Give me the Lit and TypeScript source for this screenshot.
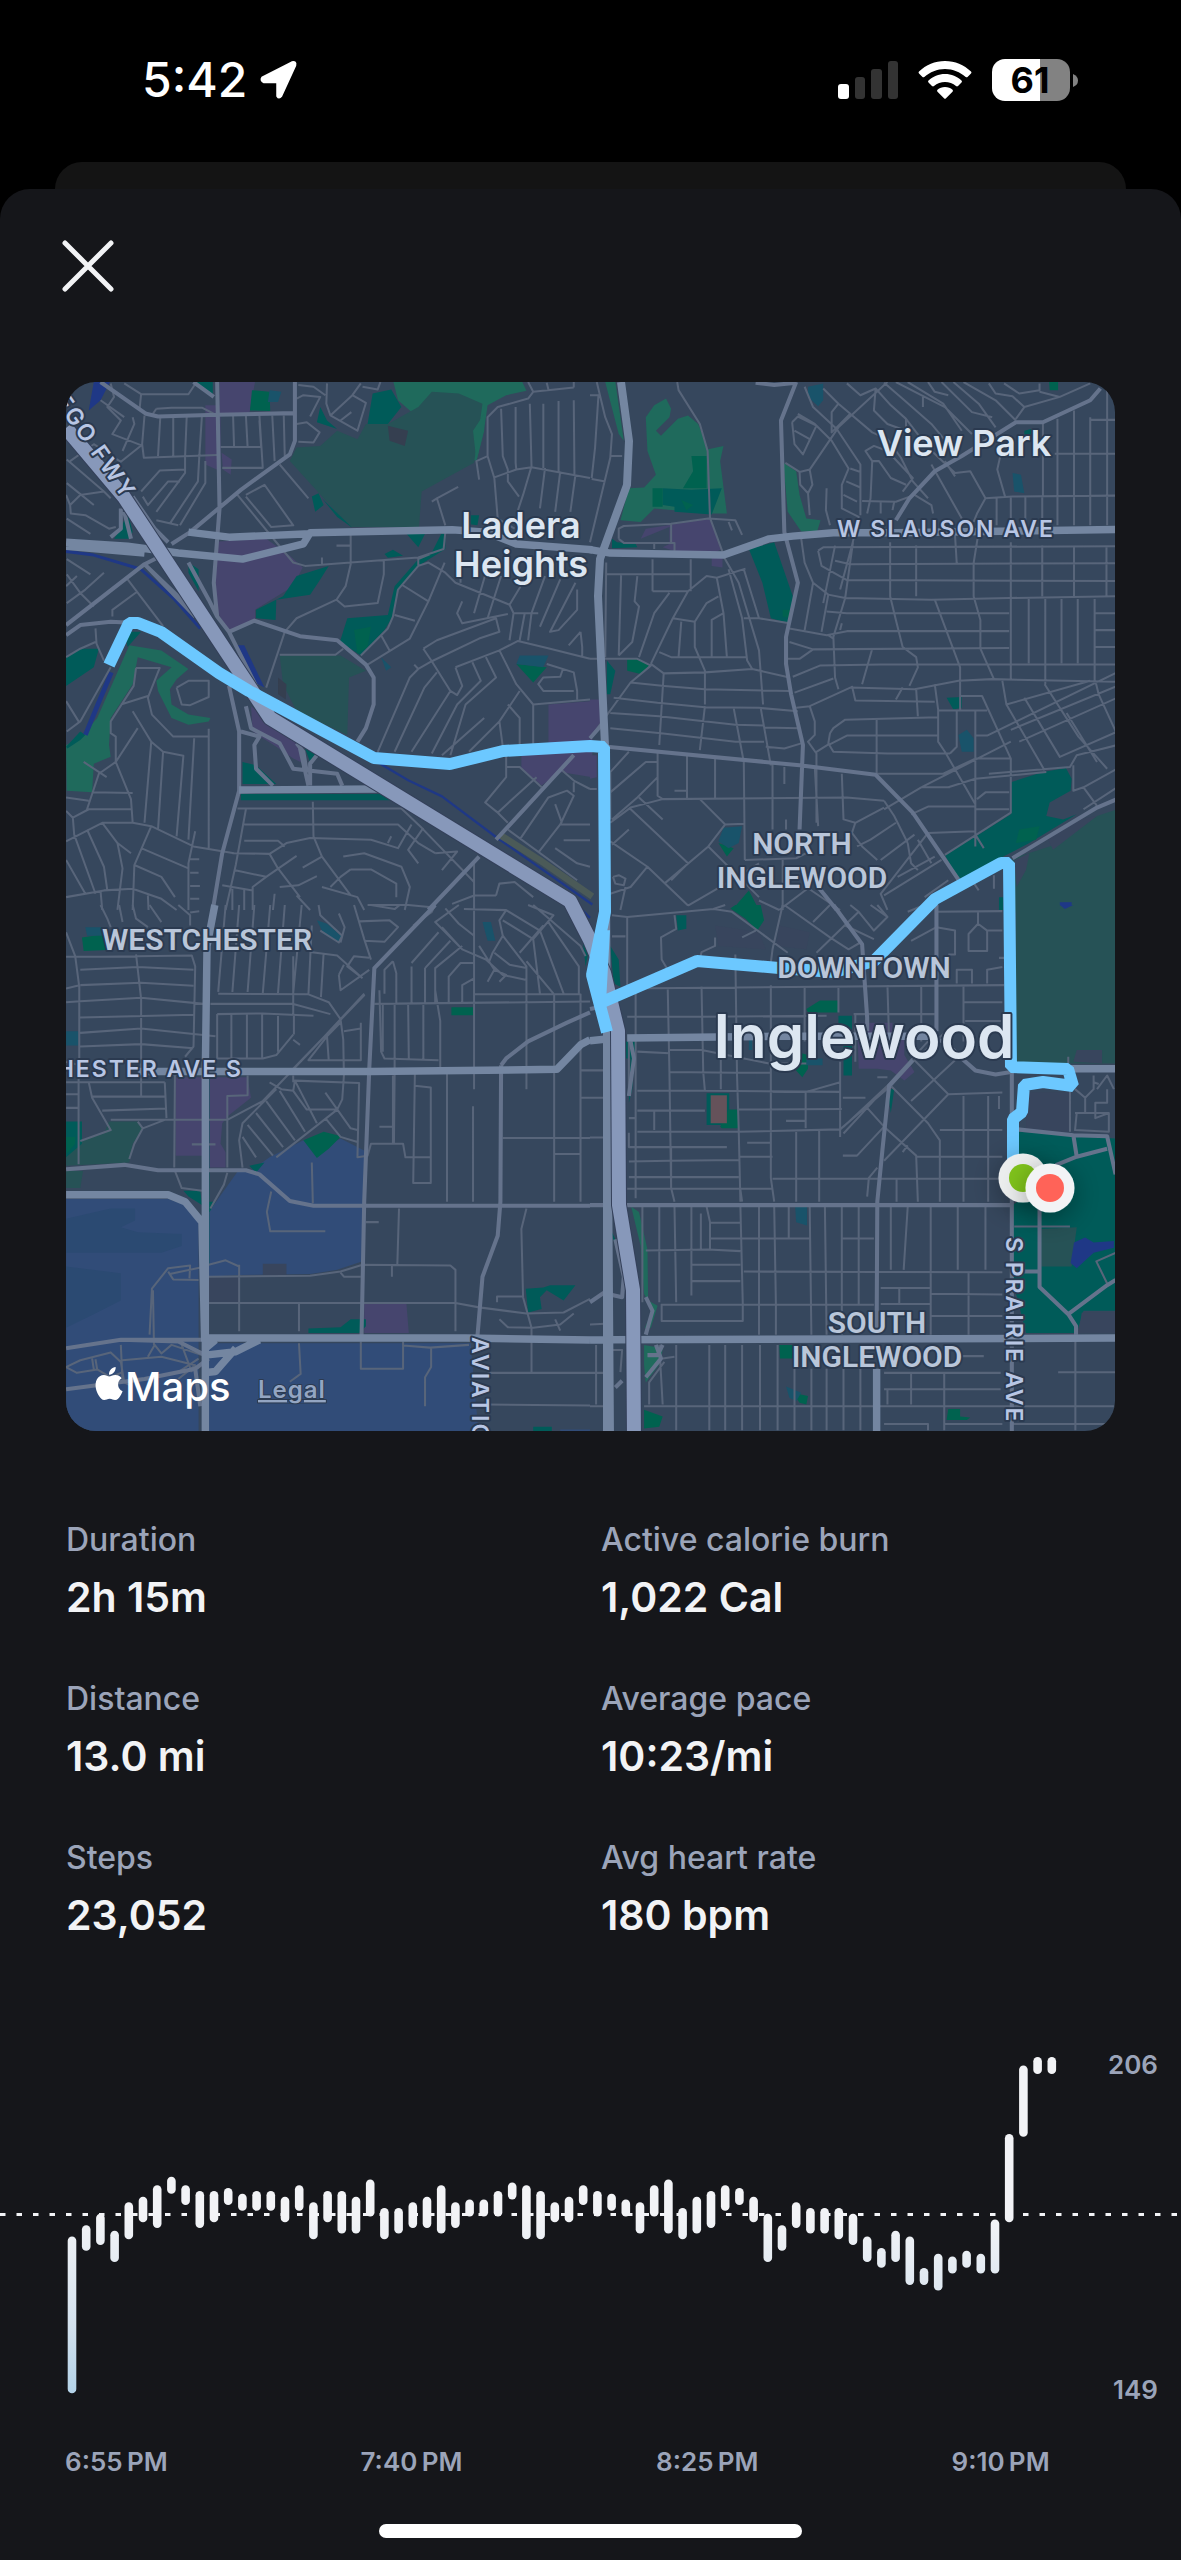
import { LitElement, html, svg, css } from "lit";
import { customElement } from "lit/decorators.js";

type Area = [fill: string, d: string];
type Line = [stroke: string, width: number, d: string];
interface Tile {
  transform: string;
  areas: Area[];
  water: Line[];
  minor: string;
  mid: string;
  major: string;
}

const C = {
  teal: "#005b59",
  leaf: "#1f6a5c",
  moss: "#265256",
  grass: "#00624f",
  pool: "#19536a",
  mall: "#46456e",
  airport: "#314c78",
  apron: "#2b4a72",
  water: "#1f3886",
  dusk: "#38455d",
  clay: "#65525a",
};

const tiles: Tile[] = [
  {
    transform: "translate(60 380) scale(.338)",
    areas: [
      [C.mall, "M472 0H578L560 100H472Z M430 75H475V270L430 250Z M478 215L508 235L505 280L482 265Z M468 478L610 470L680 520L718 555L690 610L577 680V708L500 742L460 680V545Z M1445 960L1575 950V1175L1480 1160L1425 1200L1365 1150V1110L1445 1080Z M565 965L720 1080L712 1130L690 1120L640 1085L570 1040Z"],
      [C.leaf, "M985 0H1365L1380 32L1320 45L1265 75L1255 145L1232 240L1222 235L1225 100L1100 40L1070 100L1040 95L1000 60Z"],
      [C.moss, "M1060 80L1100 35L1180 40L1250 70L1225 245L1070 330L1062 435H860L780 350L680 240L700 200L770 195L820 150L880 175L905 130L970 130Z M650 815H830L905 860L855 880L850 1050L700 980L660 900Z"],
      [C.teal, "M400 6H452V50Z M925 40L980 28L1010 80L970 130L910 130Z M770 80L790 120L820 145L760 125Z M745 345L765 335L780 370L755 390Z M775 350L865 437L820 405Z M18 820L60 795L115 795L100 850L18 905Z M540 1130L580 1140L640 1195H540Z M535 1225H960L985 1243H535Z M580 680L660 640L700 580L795 550L770 590L740 635L640 650L638 710L580 705Z M850 705L970 695L990 610L1060 530L1100 510L1128 455H1140V500L1060 550L1000 620L985 700L960 740L890 815L828 775Z M1025 455H1080L1060 495Z M960 515L985 502L1015 520L970 526Z M200 390L215 450L205 470H160L180 440Z M380 540L410 560L410 625L380 570Z M725 1090L760 1100L740 1130Z M1215 400L1240 400L1235 430L1200 425Z"],
      [C.leaf, "M205 785L300 800L380 855L345 885L325 915L330 960L380 990L445 1000L440 1010L380 1020L330 1000L290 920L285 890L330 850L230 820L215 900L150 1000L145 1080L150 1115L100 1135L95 1220L20 1215L18 1080L60 1060L110 1000Z M1222 150L1255 100L1255 150L1232 240Z"],
      [C.teal, "M18 1085L60 1040L75 1050L60 1065L22 1090Z M190 745H240L200 790Z"],
      [C.grass, "M870 740L920 730L910 790L880 810Z M568 30L620 35L622 92L562 90Z M1350 840L1440 850L1400 895Z"],
      [C.pool, "M620 30L655 35L645 65L615 65Z M1360 815H1445L1430 850L1350 840Z M950 820L980 850L965 860Z"],
      ["#353f50", "M970 135L1030 150L1020 195L975 180Z M645 880L670 900L668 945L645 930Z"],
      [C.water, "M100 6H148L120 60L85 90Z M18 150H42L25 190Z M520 785L545 785L605 910L575 895Z"],
    ],
    water: [
      [C.water, 9, "M18 507L100 518L240 560L340 650L415 735"],
      [C.water, 14, "M152 865L112 960L75 1050"],
      [C.water, 7, "M820 1060L1030 1184L1130 1232L1290 1352L1575 1552"],
      ["#4b5a58", 20, "M1300 1345L1420 1421L1575 1528"],
    ],
    minor:
      "M150 10L160 50L140 80L180 120L155 160L245 195 M190 10L240 42H380L400 12 M240 42L235 90 M285 85L275 100 M285 85L330 82H420L465 105 M250 105L243 190L248 230L465 222 M297 105L290 225 M335 105V228 M375 105L370 228 M420 105L412 228 M245 190L180 242L100 190L30 240 M215 110L220 130L185 210 M120 60L190 110 M20 235L130 330L150 350 M20 305L100 370 M30 370L60 340L130 330 M30 370L32 395L75 400L145 440L165 435 M20 410L90 455 M30 370L18 340 M100 260L130 290 M240 330L295 268L370 265 M370 228V275L285 390 M412 228L408 300L325 425 M430 240V305L355 430 M245 345L260 370L320 300H355 M285 415L350 430 M475 198H595L590 120 M512 105L515 198 M550 105L555 198 M590 105L600 262 M628 105L635 240 M662 105L665 225 M480 260H600 M650 250L735 350 M550 340L605 310L690 430L625 435L550 345 M525 340L640 480L690 540L725 550L860 540L1060 525L1135 500L1140 450 M700 55L720 45L770 50L740 108 M705 15L750 20L785 45 M700 130L730 125L768 155L750 185L705 183 M790 10L788 70L800 105L880 150L905 68L865 45L800 105 M865 45L890 10 M895 20L940 28L948 6 M830 120L862 95 M860 458V545L845 610L818 650L842 670L940 660L958 575V530 M818 490H860 M818 650L700 705L665 745L610 910 M775 525V545 M650 813H815L838 795 M1140 430L1115 350L1100 360 M1115 350L1178 316 M1240 295L1232 240L1265 225L1285 290L1295 410L1345 440 M1265 225V110L1295 80L1385 55L1400 35L1520 22 M1305 85L1310 225L1325 265 M1348 80V245L1350 265 M1390 70L1395 255 M1430 70V260 M1475 62V270 M1520 60L1522 280 M1285 288L1350 265L1395 258L1568 290 M1325 265V300L1358 345 M1395 255L1370 340L1355 385 M1435 260L1420 380 M1480 270L1465 390 M1525 280L1510 390 M1385 6L1400 35 M1440 8L1445 28 M1520 6V22 M1060 525V550L1090 540L1140 570L1170 600L1330 665L1375 590 M1060 550L1000 620L985 700L970 735L890 815 M1010 605L1090 655 M990 695L1050 712 M950 755L975 800 M1138 540L1090 655L1035 765L910 842 M1060 530L1095 515 M1185 585V600 M1260 570L1225 690 M1305 580L1265 705 M1330 665L1342 690L1330 770 M1342 690H1415 M1375 690L1360 770 M1435 580L1395 690L1385 770 M1480 590L1420 730 M1525 600L1450 745L1475 740L1530 680V620 M1190 655L1175 690L1190 720L1325 692 M1075 795L1115 770L1290 705L1300 745L1240 765L1100 832L1075 795 M1100 832L1155 920L1175 932L1190 905L1170 850 M1100 832L1060 855L1035 880L940 1100 M1060 855L1048 842 M1115 865L1078 910L990 1100 M1155 920L1040 1100 M1170 850L1300 800L1355 772L1450 795L1568 825 M1260 820L1290 880L1200 960L1155 1110 M1220 835L1245 890L1175 960L1100 1105 M1300 800L1350 900L1400 960L1568 945 M1360 920L1300 1010L1210 1100 M1325 960L1360 1000V1090 M1400 960V1080 M1300 1010L1310 1085 M1440 840L1520 865L1530 920V945 M1520 920H1430L1415 900L1430 880L1480 878L1488 855 M1540 745L1545 790V822 M1540 745L1505 785 M1130 1110L1255 1000 M1320 1110V1175L1258 1250L1295 1280L1410 1175 M1320 1145L1360 1145L1425 1205 M1290 1275L1325 1310 M1325 1330L1530 1480 M1360 1360L1445 1235L1500 1215L1520 1230L1480 1315L1415 1398 M1480 1315H1568 M1465 1255L1485 1310 M1490 1362H1568 M1465 1385L1530 1430L1568 1440 M1480 1150L1520 1185L1568 1210 M1520 1190V1220 M20 575L60 630L100 670 M18 610L50 580 M20 660L75 620L130 570 M20 530L90 575 M155 700V680L230 625 M200 590L305 728 M105 735L108 780L130 830 M18 820L60 795L105 775 M150 850L60 1010L20 1040 M18 950L55 1010 M225 852L218 905L150 1010V1045L165 1055V1130L210 1240L215 1310 M225 852H295L260 940L272 990L335 1055H438 M215 980L270 1070L305 1100L365 1112L345 1350 M260 935L180 960 M230 1030L165 1130 M270 1070L250 1310 M305 1100L290 1330 M397 1060L380 1360 M440 1032V1385 M345 910L360 960L385 962L440 938V890H380L345 910 M70 1130L138 1175 M165 1130L115 1165L80 1270H215 M95 1220L215 1222 M18 1235L85 1245 M18 1275L38 1295L42 1345L105 1520 M38 1295L85 1270 M18 1365L125 1310L215 1310L270 1320L395 1380L515 1400 M125 1310L170 1370L210 1400 M80 1330L130 1440L140 1510 M18 1420L75 1520 M270 1320L220 1435L215 1568 M240 1385L380 1445 M220 1435L300 1470L340 1530 M400 1335L380 1430V1568 M385 1418H412 M385 1458H410 M385 1497H414 M385 1535H412 M18 1530L130 1510L215 1505L300 1535L345 1568 M170 1370L185 1445L170 1568 M120 1512L125 1568 M260 1525L262 1568 M525 1268H1010L1070 1325L1225 1485 M545 1315H1000L1060 1370L1110 1400 M550 1270L520 1435L490 1568 M545 1363H645L665 1380 M748 1248L750 1350L775 1410L860 1525 M510 1400L620 1402L670 1370L740 1355L920 1360L1000 1385L1040 1315 M620 1402L645 1445L710 1530 M515 1450L610 1470L700 1408 M718 1443L775 1410 M838 1410L900 1400L1010 1440L1035 1500L1020 1568 M860 1448H920L995 1490V1530 M860 1448L830 1470L800 1500 M610 1470L570 1500V1568 M480 1495L570 1510 M650 1500L705 1495L760 1468 M700 1525L740 1568 M775 1500L880 1530L900 1568 M970 1370L980 1350 M1075 1325L1030 1390L1060 1430 M1110 1400L1175 1395L1130 1450 M910 1553H1030L1100 1560 M1225 1430V1568 M1160 1550L1225 1525H1290 M1290 1525L1300 1490L1345 1485L1400 1530 M545 1505V1568 M510 1505V1568 M635 1520L630 1568",
    mid: "M120 6L255 100L290 108L465 103L690 98 M465 6L472 380L455 600L465 700L500 745L580 905 M695 0V180L680 220L535 325L385 450L330 485 M500 745L575 712L710 758L820 770L905 842L928 880V960L905 1030L880 1070 M500 905L530 1040V1215L480 1400L452 1568 M550 965L565 1030L650 1075L690 1150L820 1165L835 1200 M535 1040L590 1055L575 1080L580 1150L630 1200 M18 725L250 545L300 520 M18 755L60 725L150 715L210 718 M380 540L440 650L465 700 M215 345L280 440L320 480 M180 380L180 440L150 465 M190 390L210 470 M250 545L370 660 M250 545L400 700 M710 1090L735 1200 M740 1200V1135L760 1110 M530 1213H940 M1290 1360L1520 1110 M1090 1568L1240 1410 M395 6L455 50 M700 1075L720 1100L730 1160",
    major: "M18 480L200 492L350 512L540 530L720 485L740 452L1160 443L1260 450L1350 485L1575 502 M380 450L500 465L740 455 M18 492L250 512 M530 1213L940 1210",
  },
  {
    transform: "translate(590 380) scale(.338)",
    areas: [
      [C.leaf, "M45 6H75L100 180L85 160Z M165 110L190 75L225 55L240 85L235 110L195 150L210 165L260 115L290 105L320 130L345 190L350 205L395 195L385 240L405 395L350 395L300 390L190 380L150 420L90 415L115 320L160 318L195 280L170 210Z M572 245L610 270L620 340L640 410L682 415L672 448H625L585 390Z"],
      [C.teal, "M215 320L300 325L390 320L360 398L250 390V375L215 370Z M470 500L545 480L600 640V680L590 720L535 705L510 600Z M65 470L80 480L135 485L140 495L65 498Z M50 830L75 860L60 930L50 930Z M1055 940L1100 938V970L1075 975Z M1245 1190L1340 1160L1408 1148L1425 1180L1422 1215L1360 1250L1350 1290L1400 1300L1440 1285L1300 1370L1090 1478L1050 1405L1150 1345L1245 1285Z M1210 1530L1222 1530V1568H1210Z M1285 150L1305 145V180L1285 185Z"],
      [C.grass, "M300 225H345V320H275L305 270Z M185 320H215V375H185Z M270 355L305 370L285 385Z M110 825H145L175 845L150 870L110 860Z M570 680H595V705L570 700Z M380 1370L425 1385L405 1410Z M470 1510L500 1568H420Z M1270 1330L1330 1320L1320 1360L1260 1370Z M1358 0H1385V30H1360Z"],
      [C.mall, "M230 430L355 408L390 500L370 510L255 508L215 495L235 485V435L150 470L165 440Z M360 525H392V555L360 550Z M0 945H35V1020L0 1050Z M0 1110H20V1175L0 1180Z"],
      [C.pool, "M645 20L690 10V60L675 78L645 50Z M1250 275L1275 280L1285 335L1255 330Z M1090 1050L1115 1035L1135 1060V1100H1100Z M395 1325L450 1320L440 1370L410 1385L380 1365Z"],
      [C.moss, "M1250 1415L1360 1380L1500 1290L1560 1270V1575H1250Z"],
      [C.dusk, "M1350 1350L1440 1300L1500 1290L1370 1390Z M1255 1420L1300 1400L1290 1450L1262 1500Z"],
      [C.water, "M1390 1545H1425V1565H1390Z"],
    ],
    water: [],
    minor:
      "M20 6L45 110L65 160L60 230L0 480 M0 45H25L15 200L5 290 M60 225H95 M5 293L45 300 M258 6L262 30L325 130L348 210L355 408L400 530L440 600L500 800L512 960 M85 470V440L100 432L240 425L350 410L430 415L450 458 M85 470L100 482H250V505 M240 428V480 M410 420L420 445 M190 485V500 M635 20L660 80L730 145L800 250V400 M615 100L665 130L715 180L765 262L745 310V380L795 405L775 490L740 620 M880 6L735 140L650 265L620 272L578 245 M620 272L622 310L645 335L658 310L650 265 M645 335L650 400 M598 125L605 190L630 220L670 135L615 108L598 125 M605 150L650 175 M715 95L735 70L770 100L715 155Z M735 70L690 25 M770 100L835 155L880 175L920 230L955 300L1000 350 M770 262L800 272 M758 300L800 318 M750 340L790 360 M820 395L830 350L835 240L815 210L840 195L880 210L955 290L925 330 M835 240H855L890 290L935 310 M700 320L698 385L710 430 M860 360V395 M900 360L895 385 M805 358L905 360L960 340L1010 370L1015 395 M760 10L800 45L845 25L890 75L935 115L1000 200L1080 275L1125 270L1170 350L1145 395L1135 420 M845 25L840 90L880 130L935 150 M935 115V160 M870 8L930 60L1010 130L1060 190 M905 6L980 45L1050 80L1130 160 M940 6L1045 70L1100 150 M985 45V80 M1040 6L1130 95L1190 110 M1075 6L1150 70L1200 140 M1000 6L1020 35L1060 45 M1105 6L1200 60L1260 120 M1180 10L1200 40L1250 48L1285 80L1260 115 M1225 10L1270 40L1330 30V10 M1330 35L1390 50L1285 80 M1390 50L1480 10 M1480 110V430 M1530 20V430 M1480 118H1560 M1432 90V430 M1383 115V430 M1340 125V345 M1375 218H1560 M1215 220L1205 265L1228 345 M1170 350L1250 345L1560 342 M1245 345V440 M1203 350V430 M1288 345V440 M1338 345V440 M1010 250L1100 410 M1050 240L1080 285 M625 470L635 540L660 600L705 635L755 645L1010 650L1240 645L1560 640 M675 505L690 495L1560 492 M675 505L685 550L760 592L1560 595 M725 535L770 545L1560 542 M725 490L690 660 M778 480L755 645L720 760L725 880L735 915 M888 480V640L905 710L925 790 M965 490V640 M1080 460L1085 542 M1148 460L1135 542V640L1155 710V795L1195 885 M1245 480V885 M1338 490V640 M1432 490V640 M1528 490V640 M1298 648V838 M1347 648V900 M1395 648V838 M1443 648V838 M1493 648V890 M1493 690H1560 M1493 740H1560 M1493 790H1560 M700 685L760 690H1240 M590 735L700 755L760 743H1240 M590 775L660 797L1240 793 M1240 842H1560 M585 825H620L660 797 M600 878L680 845L860 842L1240 842 M605 925L720 883 M610 970L650 965L770 910L960 915L1090 890L1190 885L1560 893 M775 905L785 948L1020 952 M660 600L635 740 M705 635L685 745 M740 740L745 720 M705 755L720 765 M835 795L805 900 M925 790L965 820L970 850L945 905 M1020 650L1095 850V975 M925 910L905 945 M965 915L970 995 M1020 900L1030 975V1070L1050 1100L1140 1255 M1030 978H1175 M1095 935H1160L1245 1120V1280L1050 1405 M1085 980V1085L1065 1105 M1140 980V1380 M1140 1052H1175L1560 865 M650 965L665 1010V1050L645 1070L670 1105V1310 M710 1045L720 1030L755 1005L1030 998 M710 1045L705 1075L720 1100L880 1105H1065 M705 1080L760 1052H1030 M670 1100L710 1075 M848 1000V1165 M848 1165H1045L1140 1120H1245 M1220 890L1232 960L1345 1155 M1232 960L1480 890 M1285 940L1390 1115L1560 1040 M1345 900L1445 1055L1530 1150 M1410 985L1500 1130 M1495 890L1505 930L1560 1050 M1245 1035L1560 905 M1270 1070L1560 940 M1180 1165L1420 1145L1440 1110L1560 1080 M1060 1205L1140 1180L1350 1160 M1430 1140V1215L1460 1205L1560 1150 M1460 1205L1500 1260 M1460 1270L1560 1205 M980 1205H1065 M870 1270L980 1205L1245 1070 M0 825H140L180 845L120 895L0 1060 M48 575H295 M48 540L45 820 M92 578L85 815 M185 530V625 M140 580L132 655L145 670L125 775L85 815 M298 530V625 M185 625H290L345 580L375 585L460 558 M235 630L190 690L145 820 M290 625L245 705L180 840 M380 640L345 660L310 715L245 705 M375 585L395 690L360 710V820 M310 715V790L340 860V960 M395 690L405 820 M270 715L262 820 M205 805L240 820H465 M455 705L500 705L590 720 M410 560L450 705L465 830L480 855L590 880 M455 560L500 705 M180 840L218 868L340 865L480 855 M218 868L205 1080 M120 895L220 905L340 915L590 920 M70 940L200 955L340 968L500 970L615 980 M60 985L205 995L430 1020L515 1022 M60 1030L210 1045L430 1070L515 1070 M340 965L325 1095 M425 970L455 1130 M505 970L535 1140 M515 1028L620 1030 M520 1085L575 1090L625 1075 M200 1100V1230L215 1240L760 1235L870 1245 M200 1130H165L60 1220 M115 1100L60 1160 M287 1110V1240 M370 1120V1238 M455 1130L458 1420 M540 1135V1330 M575 1145V1195 M250 1215H285 M665 1145L675 1320 M745 1165L750 1300L785 1310L870 1265 M870 1245L900 1290L940 1370 M215 1240L120 1265L60 1310 M200 1175L140 1235L65 1300 M145 1235L215 1300 M115 1265L290 1430 M325 1240L400 1315L350 1380L220 1490 M400 1315L458 1313 M350 1380L500 1530 M60 1365L170 1440L290 1555 M115 1330L65 1375 M68 1470L85 1465L105 1475L100 1495L75 1490L68 1470 M170 1440L120 1500L60 1520 M290 1430L240 1480 M458 1420L610 1415L640 1400 M290 1555L420 1480L500 1430 M580 1300V1330 M785 1310L775 1340L805 1380L850 1420 M905 1310L830 1360L790 1380 M960 1345L860 1420 M1000 1340L860 1520L880 1568 M1000 1340L1140 1335 M1140 1345L1165 1385 M940 1370L950 1430L970 1450 M970 1360L1010 1430 M1020 1410L910 1470 M1060 1480L990 1530 M870 1525L1040 1420 M950 1285L1000 1262H1140 M1140 1270H1240 M1145 1240L1170 1220H1240 M1195 1465V1505 M1130 1480L1150 1510 M500 1540L560 1568 M570 1420V1568 M560 1568L650 1500 M640 1500L740 1568 M60 1160V1300 M105 1500L90 1568 M0 1210H20",
    mid: "M610 6L565 120L575 450L615 600L580 760V840L595 930L630 1080L620 1330 M490 8L545 15L610 8 M905 415L945 350L1020 270L1100 225L1260 125H1340L1480 60L1510 25 M50 1085L620 1140L845 1168L955 1280L1090 1478 M1250 1415L1500 1265L1560 1240 M675 1500L730 1568 M0 1060L35 1020",
    major: "M0 502L60 512L395 518L530 470L600 462L720 452H905L1560 442",
  },
  {
    transform: "translate(60 905) scale(.338 .341)",
    areas: [
      [C.airport, "M18 862H320L370 880L410 930V1568H18Z M440 900L525 782H560L620 740L720 690L760 720L830 685L900 720L895 1045L820 1070L740 1082L530 1085L440 1090Z M435 1285H1215L1240 1568H435Z M1480 1538H1568V1568H1480Z"],
      [C.apron, "M18 920L150 890H222V925L180 945L230 960L360 965V1000L300 1020H18Z M18 1060L180 1080V1160L100 1200L18 1240Z"],
      [C.mall, "M342 505H422V735H342Z M438 505H555L565 565L495 620L480 640L475 700L490 725V770H440Z M900 1170H1025L1032 1255H900Z"],
      [C.moss, "M145 635H230L248 655L215 700L205 755L18 765V735L60 690L130 670Z M18 780H68L60 830H18Z"],
      [C.teal, "M18 635H65V700L18 740Z M425 510H442V1060L425 900Z M365 838H415L420 880L380 855Z M440 870L460 870L440 905Z M560 765L605 755L580 785Z M735 1242L830 1238L860 1215H905V1235L885 1255H735Z M1378 1125L1430 1122L1450 1115H1525L1490 1160L1440 1130L1420 1150L1425 1185L1385 1195Z M1545 90L1565 130L1555 180Z M1490 0L1545 60L1520 40Z M1400 1530H1455V1545H1400Z"],
      [C.grass, "M65 95L135 85L140 132L70 135Z M720 690L780 665L832 678L795 715L760 742Z M1158 300H1222V323H1158Z M18 680H45V700L20 730Z"],
      [C.pool, "M75 65H135V90H80Z M760 45L790 55L832 90L828 112L780 85Z M1250 50L1275 50L1288 105H1265Z M18 370H55V412H18Z"],
      [C.dusk, "M600 1052H670V1085H600Z M440 1092H530V1165H440Z"],
    ],
    water: [[C.water, 7, "M1530 0L1568 38"]],
    minor:
      "M120 0L140 40L150 65 M175 0L185 50 M215 0L225 40L260 65 M265 0L300 50 M350 0L385 30V60 M385 22L412 18 M18 80L45 150L57 240V480 M18 152H120L390 148L400 180L395 415L370 445 M60 190L230 182L395 190 M60 235L240 228L395 237 M18 285L60 282L240 272L425 290 M60 330L395 322 M60 375L240 362L395 378L460 385 M60 415L240 408L395 420 M225 145L240 275V560 M18 245L57 235 M18 460L60 470 M18 520H310 M85 520L95 565L150 660L60 692 M310 520L315 625 M95 562H315 M125 603L315 597 M18 555H55 M18 595H55 M55 480V760 M150 630H495V560L555 558V500 M340 500L338 770 M230 635L245 655L220 700L205 745 M245 655L310 630 M390 702H460 M340 780L360 830L420 838 M495 785L485 820L445 890 M495 620L495 770 M490 0L468 255 M530 0L510 255 M575 0L555 255 M622 0L600 258 M665 0L645 258 M715 0L690 258 M468 260L735 262L795 285L830 335L838 395L840 500L835 570L820 600L640 740 M445 290H690L800 320 M465 320L600 318L750 325 M465 320V450H600L640 440L690 380 M507 320V450 M553 320V450 M598 320V450 M645 320V430 M692 320V380 M690 150V320 M745 60L735 262 M780 140L772 270 M740 138L820 148L895 215 M765 0L770 30L835 90L825 110L770 75 M825 25L842 65L830 110 M870 0L900 100L920 160 M885 48L975 45L1000 65L960 108L900 105 M920 0L990 12L1005 0 M895 215L850 180L870 150L915 155 M825 205L830 250L915 190 M840 175L825 205 M690 395L710 410 M840 370L890 362 M890 345V455H735L790 385L795 455 M790 385L830 345 M865 300L900 265L690 480 M600 575L750 420L900 260 M620 520L655 540L690 545L730 600L820 600 M690 545L695 515L885 522L880 740L910 735L920 700H1015L1022 740H1095 M495 630L600 575L640 540 M640 540L540 640L530 690L540 770 M540 680L580 740 M555 645L630 735 M580 610L660 710 M610 575L695 690 M650 545L725 665 M695 515L760 640 M785 550L860 655L880 660 M785 625L830 680L880 695 M690 520V500 M930 290L1568 283 M945 250L950 430L960 450L1120 455 M960 260V190L985 165 M955 290V430 M990 290V500L988 700 M1030 290L1032 455 M1075 290V455 M1110 250L1125 340V480 M985 165L995 200V290 M1045 60L1100 20L1110 0 M1040 180V290 M1040 170L1120 80 M1080 185V290 M1080 185L1155 105 M1110 290V185L1190 120 M1150 285V210L1185 170H1225 M1190 285V235L1225 215 M1130 65L1190 130L1260 160L1310 205L1380 220 M1180 0L1110 50L1190 130 M1140 10L1180 55L1225 90 M1195 12L1320 15L1420 75L1490 260 M1320 15L1300 45L1310 90L1380 180V540 M1225 0V285 M1225 285V540 M1222 590V870 M1240 120L1285 190L1265 225 M1285 190L1320 205L1300 225 M1310 90L1280 140L1270 165 M1285 140L1330 175L1380 185 M1310 45L1400 100L1420 260 M1400 100L1460 30L1385 0 M1400 0L1540 120L1555 150 M1360 140L1430 60 M1380 165L1460 260 M1445 50L1535 180V260 M1225 262H1540 M1462 260V870 M1540 260V870 M1540 485H1568 M1540 565H1568 M1310 683H1568 M1465 730H1540 M1145 490V870 M1050 490L1045 815H1097V535L1050 530 M1095 740H1025 M945 650H985 M985 500V700 M745 755L748 875 M625 840L612 900L622 957H785 M905 930H943 M1003 890L998 1055 M440 1090L740 1087L830 1075L895 1055L1155 1057L1170 1070V1250 M982 1057V1090 M830 1078L840 1090H890 M440 1167H1170L1240 1180L1380 1198L1490 1195L1568 1155 M530 1055V1250 M440 1055L490 1042L530 1060 M707 1170V1250 M707 1285L712 1375L680 1398 M890 1280V1360H1015V1280 M1015 1292L1095 1298L1210 1290 M1098 1298V1355L1080 1385V1470 M1380 890L1365 950L1370 1150L1395 1240V1370 M1370 1148H1293V1165 M1300 1215L1325 1238L1400 1240L1480 1230L1520 1198 M1465 1215L1480 1248 M1265 1372H1568 M1265 1465L1568 1468 M265 1260L272 1125L320 1065L385 1057L383 1095 M278 1290L275 1130 M320 1075L335 1098L410 1100 M325 1082L420 1062 M18 1355L60 1335L150 1312L180 1340L190 1400L210 1410 M18 1355L50 1372L110 1362L150 1385L185 1370 M95 1330L100 1362 M105 1332L110 1362 M180 1290L185 1400 M260 1325L280 1290L300 1315L330 1290L420 1320 M185 1335L300 1325L400 1350L350 1390 M360 1290L390 1370 M350 1370L410 1330",
    mid: "M1110 0L930 185L915 480L900 870L892 1270 M18 775L190 762L290 778L550 778L590 790L680 868L750 882H1568 M1305 470L1303 870L1295 970L1250 1090L1235 1265 M1305 470L1320 450L1385 400L1500 345L1568 315 M18 1300L180 1275L420 1275 M18 1420L250 1390L400 1360L440 1330 M180 1275L350 1280L430 1320 M415 1470L400 1360",
    major: "M458 0L435 120L430 480V1568 M230 488H920L1470 482L1540 410L1568 395 M18 850H320L370 870L420 930L428 1280 M430 1270H1200L1568 1276 M430 1320L520 1310L590 1275 M440 1370L460 1368L520 1300 M430 1300L460 1275",
  },
  {
    transform: "translate(590 905) scale(.338 .341)",
    areas: [
      [C.moss, "M1260 0H1560V465H1260Z"],
      [C.teal, "M1265 665L1380 672L1560 685V1190H1460L1440 1255H1290L1250 1100V880L1265 870Z M255 30H285V70L260 75Z M735 325H775V500H750V400L735 390Z M345 552H412V645H345Z M880 540L900 540L890 610Z M60 120L85 160L90 240L70 230Z M60 400H135L125 540L115 580L120 450H60Z M60 950L85 1000L75 1000Z"],
      [C.moss, "M1335 950L1440 945L1425 1060H1335Z"],
      [C.grass, "M415 10L430 0H505L515 45L495 75L460 40Z M640 305L680 280H735V315H645Z M385 650L410 600H440V655L390 655Z M610 430L645 440V480L628 505L605 480Z M560 1290H600V1330H562Z M160 1480L215 1500L205 1530L160 1535Z M1060 1478H1095V1500L1125 1503L1115 1510H1055Z M600 1430L645 1440L640 1465L620 1460Z"],
      [C.leaf, "M122 885L145 900L170 1010L172 1160L200 1175L180 1240H162L185 1190L160 1140L150 1000Z M160 1290L215 1300L210 1340L165 1400L160 1350Z"],
      [C.clay, "M357 558H405V640H357Z"],
      [C.pool, "M607 885H642V940L610 930Z M640 450H688V470H640Z M580 1412L625 1430L610 1455L590 1445Z M470 395H480V425H470Z"],
      [C.mall, "M790 345H895V370L930 390V440L960 490L930 515L890 485L850 480H795Z"],
      [C.dusk, "M1440 425H1515V465L1430 460Z M1290 550H1420V665H1290Z M1455 1195H1556V1255H1445Z M370 60L500 80L520 130L380 120Z M560 60L650 80L640 130L550 120Z"],
      [C.water, "M1432 990L1465 975L1490 990L1550 985V1005L1490 1020L1440 1065L1422 1050Z M1390 0H1430L1405 12Z"],
    ],
    water: [],
    minor:
      "M65 30L110 35L365 12L420 20L585 140 M110 35V240 M65 92H105 M250 30L255 70L210 95L212 160L230 190 M370 95V120L330 138L325 160 M365 12L400 0 M570 0L540 130L535 170 M450 95L490 75 M575 0L710 95L765 130L800 110 M660 50L710 0 M670 140L795 20L770 0 M795 20L840 75L880 35L850 0 M755 60L840 100 M880 35L830 0 M940 20L990 0 M1025 25V0 M950 105L1025 65L1080 75V145H1060 M1025 20L1220 18 M1148 18V55L1120 85V135H1175V75L1148 55 M1175 75H1220 M1175 230V190L1220 182 M1085 230V190H1130V230 M1210 155H1225 M100 245L1225 235 M135 245V860 M230 245L235 490L240 830L250 870 M330 240L335 490L340 545 M430 145L435 500L440 660L445 870 M535 235V800L545 870 M635 240V400 M735 240V315 M110 328H330L700 325 M780 320H1020 M880 235L885 400 M785 320V460 M980 240V400 M1105 235V400 M1108 285H1220 M1110 340H1220 M115 400V560 M140 430L235 435 M235 425H330L530 465H640 M235 490L430 492H535 M387 430V540 M140 545H340L740 548 M540 548H640L740 520 M638 548V655 M140 603H340 M440 600L745 598 M140 665H440L740 658L890 530L960 455L1060 365 M190 605V660 M580 633H635 M115 625H135 M115 668V710H405 M465 697H535 M115 752L235 750L440 748 M440 738H540 M115 798H440 M110 832H540 M240 710V830 M540 803H1220 M445 835L450 870 M610 660V870 M678 660V870 M740 460V680 M748 565H815 M748 735H790L870 650 M750 670L820 595L1000 400 M750 650L880 530 M820 595L870 650L965 735L970 870 M890 530L1000 640L1035 690V870 M850 505H880 M870 750L1060 555L1220 550 M1060 555L960 455 M950 575L1080 455 M925 725L940 705 M1035 660H1220 M965 738H1220 M1105 560V870 M1178 560V870 M1210 560V598 M820 855L825 800L850 770 M907 805V870 M155 885V1165 M205 885V1165 M250 885L255 1165 M300 885V1145 M328 905V1010 M345 885L355 930V1010 M355 932H445 M355 978H650 M165 1013L350 1010L445 1015 M300 1055H445 M300 1103H445 M445 885L452 1170V1220H212V1170 M500 885V1260 M545 885L550 1170V1260 M588 885V975 M650 885L655 1260 M695 885L700 1260 M745 885V1260 M795 885V1170 M455 1075L1220 1077 M745 978H840 M890 885V1070 M940 885L928 1070 M1008 885V1260 M1088 885V1070 M1170 885V1070 M860 1123H1005 M915 1125V1168 M860 1170H1005 M1010 1140L1220 1142 M1010 1205H1220 M1120 1080V1260 M210 1172H840 M205 1290L215 1465 M255 1290V1540 M353 1290V1540 M400 1290V1540 M450 1290V1540 M503 1290V1540 M555 1290V1540 M605 1360V1540 M655 1360V1540 M700 1360V1540 M750 1360V1540 M800 1360V1540 M160 1470H1550 M870 1372H1215 M870 1420H1215 M880 1420V1465 M950 1372V1465 M1048 1372V1540 M1090 1323H1165 M870 1522H1000V1540 M1050 1522H1220 M1385 1370H1555 M1436 1260V1540 M1250 1522H1555 M250 1325L215 1330 M175 1465V1400L220 1340 M18 1290V1465 M65 1305H95L90 1370 M0 1372H45 M0 1470H45 M0 1230L45 1228 M0 485H45 M0 565H45 M0 682H45 M1255 943H1420 M1415 445V465 M1420 545V665 M1435 610H1535 M1440 610L1435 660L1535 665V610L1495 625V580H1530V540 M1435 540L1465 565L1490 540V500 M1465 565V610 M1500 540L1530 500L1550 540 M1490 520L1505 525 M1555 1020L1498 1045L1530 1110",
    mid: "M720 0L805 115L820 330V370 M1025 0V370 M1000 390L1050 400L1100 450L1140 485L1200 497L1245 490 M955 455L885 530L865 720L850 870L848 1260 M0 880H1245 M0 305L25 300 M1248 490V1568 M1265 658L1430 675L1530 678L1555 790 M1430 675L1440 738L1530 715 M1440 738L1380 762L1330 850V1120L1415 1200L1438 1235V1260 M1415 1200L1530 1115L1555 1100 M1285 1075H1330 M0 1165L40 1138L95 1150L100 1090L75 980 M75 1415L95 1395 M165 1150L185 1190L165 1260 M195 1290L210 1330L165 1385 M170 1320L200 1320L215 1290 M120 400L130 450L115 560",
    major: "M0 398L50 393 M110 390L560 385H1000 M0 1276L60 1275L1560 1270 M848 1360V1568 M1410 480H1560 M55 400V870L60 1568",
  },
];

interface Place {
  kind: string;
  x: number;
  y: number;
  text: string;
  turn?: number;
}

const places: Place[] = [
  { kind: "town", x: 521, y: 538, text: "Ladera" },
  { kind: "town", x: 521, y: 577, text: "Heights" },
  { kind: "town", x: 964, y: 456, text: "View Park" },
  { kind: "area", x: 802, y: 854, text: "NORTH" },
  { kind: "area", x: 802, y: 888, text: "INGLEWOOD" },
  { kind: "area", x: 864, y: 978, text: "DOWNTOWN" },
  { kind: "area", x: 877, y: 1333, text: "SOUTH" },
  { kind: "area", x: 877, y: 1367, text: "INGLEWOOD" },
  { kind: "area", x: 207, y: 950, text: "WESTCHESTER" },
  { kind: "city", x: 864, y: 1058, text: "Inglewood" },
  { kind: "road", x: 946, y: 537, text: "W SLAUSON AVE" },
  { kind: "road end", x: 243, y: 1077, text: "HESTER AVE S" },
  { kind: "road start", x: 472, y: 1337, text: "AVIATION", turn: 90 },
  { kind: "road start", x: 1006, y: 1237, text: "S PRAIRIE AVE", turn: 90 },
  { kind: "road end", x: 124, y: 501, text: "EGO FWY", turn: 55 },
];

const route =
  "M109 665L129 623H138L161 632L219 673L249 691L374 758L450 764L503 751L590 746L604 747L605 912L592 975L607 1032 M604 930L600 1003L697 961L779 968L834 972L874 961L935 899L1001 863H1009L1011 1067L1068 1069L1073 1086L1043 1082L1024 1085L1022 1112L1013 1119V1160";
const freeway = "M66 428L124 497L270 718L570 901L590 940L604 973L618 1031L619 1205L633 1290L634 1440";

const stats: [string, string][] = [
  ["Duration", "2h 15m"],
  ["Active calorie burn", "1,022 Cal"],
  ["Distance", "13.0 mi"],
  ["Average pace", "10:23/mi"],
  ["Steps", "23,052"],
  ["Avg heart rate", "180 bpm"],
];

/* Heart rate ranges, one per two-minute slot, in half-beat steps below the maximum. */
const ranges: [number, number][] = [
  [63, 112], [59, 62], [55, 60], [61, 66], [51, 58], [49, 52], [45, 54], [42, 42], [45, 46], [47, 54],
  [47, 52], [46, 46], [48, 48], [47, 48], [47, 48], [49, 52], [45, 48], [51, 58], [47, 52], [47, 56],
  [49, 56], [43, 50], [53, 58], [53, 56], [51, 54], [49, 54], [45, 56], [51, 54], [50, 50], [50, 50],
  [47, 50], [44, 44], [45, 58], [47, 58], [51, 52], [49, 52], [45, 46], [47, 50], [48, 48], [50, 50],
  [51, 56], [45, 50], [43, 56], [53, 58], [49, 56], [47, 54], [45, 48], [46, 46], [49, 52], [55, 66],
  [59, 62], [51, 54], [53, 56], [53, 56], [53, 58], [55, 60], [63, 66], [67, 68], [61, 66], [63, 74],
  [74, 74], [69, 76], [70, 70], [68, 68], [69, 70], [57, 70], [27, 52], [3, 22], [0, 0], [0, 0],
];
const STEP = 2.85;
const times = ["6:55\u2009PM", "7:40\u2009PM", "8:25\u2009PM", "9:10\u2009PM"];

@customElement("status-bar")
class StatusBar extends LitElement {
  static styles = css`
    :host {
      display: flex;
      justify-content: space-between;
      align-items: center;
      padding: 56px 103px 58px 142px;
      font-family: Inter, "Liberation Sans", sans-serif;
      color: #fff;
    }
    .clock, .icons { display: flex; align-items: center; height: 48px; }
    .clock { gap: 12px; font-size: 48px; line-height: 48px; font-weight: 500; }
    .icons { gap: 20px; }
    svg { display: block; }
    .charge { font: 700 36px Inter, "Liberation Sans", sans-serif; text-anchor: middle; }
  `;
  render() {
    return html`
      <div class="clock">
        <span>5:42</span>
        <svg width="39" height="40" viewBox="0 0 39 40" aria-hidden="true">
          <path d="M3.500 17.500L33 2.500Q37 1.500 36 5.500L22 36Q20 38.500 18.500 36V22H5Q1.500 20.500 3.500 17.500Z" fill="#fff" stroke="#fff" stroke-width="2.500" stroke-linejoin="round" />
        </svg>
      </div>
      <div class="icons">
        <svg width="60" height="40" viewBox="0 0 60 40" aria-label="Signal">
          <rect x="0" y="24" width="11" height="15" rx="3" fill="#fff" />
          <rect x="17" y="17" width="10" height="22" rx="3" fill="#333" />
          <rect x="33" y="9" width="11" height="30" rx="3" fill="#333" />
          <rect x="50" y="1" width="10" height="38" rx="3" fill="#333" />
        </svg>
        <svg width="54" height="40" viewBox="0 0 54 40" aria-label="Wi-Fi" fill="#fff">
          <path d="M27 1C37 1 46 5 53 11.500Q54 12.500 53 13.500L49.500 17Q48.700 17.700 47.700 17C42 12 35 9 27 9S12 12 6.300 17Q5.300 17.700 4.500 17L1 13.500Q0 12.500 1 11.500C8 5 17 1 27 1Z" />
          <path d="M27 14C33.500 14 39 16.500 43.500 20.500Q44.500 21.500 43.500 22.500L40 26Q39 26.800 38 26C35 23.500 31 22 27 22S19 23.500 16 26Q15 26.800 14 26L10.500 22.500Q9.500 21.500 10.500 20.500C15 16.500 20.500 14 27 14Z" />
          <path d="M27 27C30 27 32.500 28 34.500 29.800Q35.500 30.800 34.500 31.800L28 38.300Q27 39.300 26 38.300L19.500 31.800Q18.500 30.800 19.500 29.800C21.500 28 24 27 27 27Z" />
        </svg>
        <svg width="86" height="42" viewBox="0 0 86 42" aria-label="Battery">
          <clipPath id="cell"><rect width="78" height="42" rx="13" /></clipPath>
          <g clip-path="url(#cell)">
            <rect width="48" height="42" fill="#fff" />
            <rect x="48" width="30" height="42" fill="#828282" />
          </g>
          <path d="M81 15Q86 17 86 21.500T81 28Z" fill="#828282" />
          <text class="charge" x="38" y="34">61</text>
        </svg>
      </div>
    `;
  }
}

@customElement("route-map")
class RouteMap extends LitElement {
  static styles = css`
    :host { display: block; overflow: hidden; border-radius: 30px; background: #36475d; }
    svg { display: block; width: 100%; height: auto; }
    .line { fill: none; stroke-linejoin: round; }
    .minor { stroke: #58657a; stroke-width: 6; }
    .mid { stroke: #65738c; stroke-width: 12; }
    .major { stroke: #7486a1; stroke-width: 22; }
    .edge { stroke: #34405a; stroke-width: 16; }
    .freeway { stroke: #8798ba; stroke-width: 14; }
    .trunk { stroke: #7486a1; stroke-width: 8; }
    .track { stroke: #6cc8ff; stroke-width: 12; stroke-linejoin: bevel; stroke-linecap: butt; }
    text { font-family: Inter, "Liberation Sans", sans-serif; text-anchor: middle; paint-order: stroke; stroke: #2b3a50; stroke-width: 4; stroke-linejoin: round; }
    .town { font-size: 36px; font-weight: 600; fill: #dce6f1; }
    .city { font-size: 60px; font-weight: 600; fill: #dce6f1; }
    .area { font-family: Roboto, "Liberation Sans", sans-serif; font-size: 30px; font-weight: 600; fill: #b9c6d9; }
    .road { font-size: 23px; font-weight: 600; letter-spacing: 2px; fill: #b8c6e4; }
    .road.start { text-anchor: start; }
    .road.end { text-anchor: end; }
    .brand { font-size: 40px; font-weight: 500; fill: #fff; text-anchor: start; stroke: none; }
    .legal { font-size: 24px; font-weight: 600; letter-spacing: 1px; fill: #93a5c2; text-anchor: start; stroke-width: 2; text-decoration: underline; }
  `;
  render() {
    return html`
      <svg viewBox="66 382 1049 1049" aria-label="Route map of Inglewood">
        <defs>
          <filter id="shade" x="-100%" y="-100%" width="300%" height="300%">
            <feDropShadow dx="0" dy="6" stdDeviation="14" flood-color="#000" flood-opacity=".35" />
          </filter>
        </defs>
        ${tiles.map((t) => svg`<g transform=${t.transform}>
          ${t.areas.map(([fill, d]) => svg`<path fill=${fill} d=${d} />`)}
          ${t.water.map(([stroke, w, d]) => svg`<path class="line" stroke=${stroke} stroke-width=${w} d=${d} />`)}
          <path class="line minor" d=${t.minor} />
        </g>`)}
        ${tiles.map((t) => svg`<g transform=${t.transform}><path class="line mid" d=${t.mid} /></g>`)}
        ${tiles.map((t) => svg`<g transform=${t.transform}><path class="line major" d=${t.major} /></g>`)}
        <path class="line trunk" d="M621 382L629 441L627 485L600 559L598 596L605 746L607 1040V1431" />
        <path class="line edge" d=${freeway} />
        <path class="line freeway" d=${freeway} />
        <path class="line track" d=${route} />
        ${places.map((p) => svg`<text class=${p.kind} x=${p.x} y=${p.y}
          transform=${p.turn ? `rotate(${p.turn} ${p.x} ${p.y})` : "rotate(0)"}>${p.text}</text>`)}
        <path transform="translate(92.500 1367) scale(1.380)" fill="#fff" d="M12.152 6.896c-.948 0-2.415-1.078-3.960-1.040-2.040.027-3.910 1.183-4.961 3.014-2.117 3.675-.546 9.103 1.519 12.090 1.013 1.454 2.208 3.090 3.792 3.039 1.520-.065 2.090-.987 3.935-.987 1.831 0 2.350.987 3.960.948 1.637-.026 2.676-1.480 3.676-2.948 1.156-1.688 1.636-3.325 1.662-3.415-.039-.013-3.182-1.221-3.220-4.857-.026-3.040 2.480-4.494 2.597-4.559-1.429-2.090-3.623-2.324-4.390-2.376-2-.156-3.675 1.090-4.610 1.090zM15.530 3.830c.843-1.012 1.400-2.427 1.245-3.830-1.207.052-2.662.805-3.532 1.818-.780.896-1.454 2.338-1.273 3.714 1.338.104 2.715-.688 3.559-1.701" />
        <text class="brand" x="125" y="1401">Maps</text>
        <a href="#legal"><text class="legal" x="258" y="1398">Legal</text></a>
        <g filter="url(#shade)"><circle cx="1023" cy="1178" r="24.500" fill="#eceeee" /><circle cx="1023" cy="1178" r="14" fill="#80c31c" /></g>
        <g filter="url(#shade)"><circle cx="1050" cy="1188" r="24.500" fill="#f2f3f5" /><circle cx="1050" cy="1188" r="14" fill="#ff6459" /></g>
      </svg>
    `;
  }
}

@customElement("heart-chart")
class HeartChart extends LitElement {
  static styles = css`
    :host { display: block; }
    svg { display: block; width: 100%; height: auto; }
    text { font: 600 26px Inter, "Liberation Sans", sans-serif; fill: #9ba4b9; }
    .limit { text-anchor: end; }
    .average { stroke: #f2f3f6; stroke-width: 3; stroke-dasharray: 5.500 11; }
  `;
  render() {
    return html`
      <svg viewBox="0 0 1181 430" aria-label="Heart rate over time">
        <defs>
          <linearGradient id="tone" gradientUnits="userSpaceOnUse" x1="0" y1="170" x2="0" y2="346">
            <stop offset="0" stop-color="#f2f3f6" />
            <stop offset=".6" stop-color="#d5e2ee" />
            <stop offset="1" stop-color="#b3d2e8" />
          </linearGradient>
        </defs>
        <line class="average" x1="0" y1="167.500" x2="1181" y2="167.500" />
        ${ranges.map(([hi, lo], i) => svg`<rect x=${67.700 + i * 14.200} y=${10 + hi * STEP}
          width="8.600" height=${17 + (lo - hi) * STEP} rx="4.300" fill="url(#tone)" />`)}
        <text class="limit" x="1158" y="27">206</text>
        <text class="limit" x="1158" y="352">149</text>
        ${times.map((t, i) => svg`<text x=${65 + i * 295.500} y="424">${t}</text>`)}
      </svg>
    `;
  }
}

@customElement("app-root")
class AppRoot extends LitElement {
  static styles = css`
    :host {
      display: flex;
      flex-direction: column;
      min-height: 100vh;
      background: #000;
      color: #f2f3f5;
      font-family: Inter, "Liberation Sans", sans-serif;
    }
    .behind { height: 27px; margin: 0 55px; border-radius: 27px 27px 0 0; background: #141414; }
    .sheet {
      flex: 1;
      display: flex;
      flex-direction: column;
      box-sizing: border-box;
      padding: 45px 0 22px;
      border-radius: 30px 30px 0 0;
      background: #15161a;
    }
    .close { display: block; width: 64px; height: 64px; margin: 0 0 0 56px; padding: 0; border: 0; background: none; }
    .close svg { display: block; }
    route-map { margin: 84px 66px 0; }
    .stats { display: grid; grid-template-columns: 1fr 1fr; gap: 52px 21px; margin: 88px 66px 0; }
    .stat { display: grid; gap: 7px; }
    dt { font-size: 32px; line-height: 42px; font-weight: 500; color: #9ba4b9; }
    dd { margin: 0; font-size: 41px; line-height: 58px; font-weight: 600; }
    heart-chart { margin-top: 103px; }
    .home { width: 423px; max-width: 60%; height: 14px; margin: auto auto 0; border-radius: 7px; background: #fff; }
  `;
  render() {
    return html`
      <status-bar></status-bar>
      <div class="behind"></div>
      <main class="sheet">
        <button class="close" aria-label="Close">
          <svg width="64" height="64" viewBox="0 0 64 64">
            <path d="M9 9L55 55M55 9L9 55" stroke="#f2f3f5" stroke-width="5" stroke-linecap="round" />
          </svg>
        </button>
        <route-map></route-map>
        <dl class="stats">
          ${stats.map(([name, value]) => html`<div class="stat"><dt>${name}</dt><dd>${value}</dd></div>`)}
        </dl>
        <heart-chart></heart-chart>
        <div class="home"></div>
      </main>
    `;
  }
}
